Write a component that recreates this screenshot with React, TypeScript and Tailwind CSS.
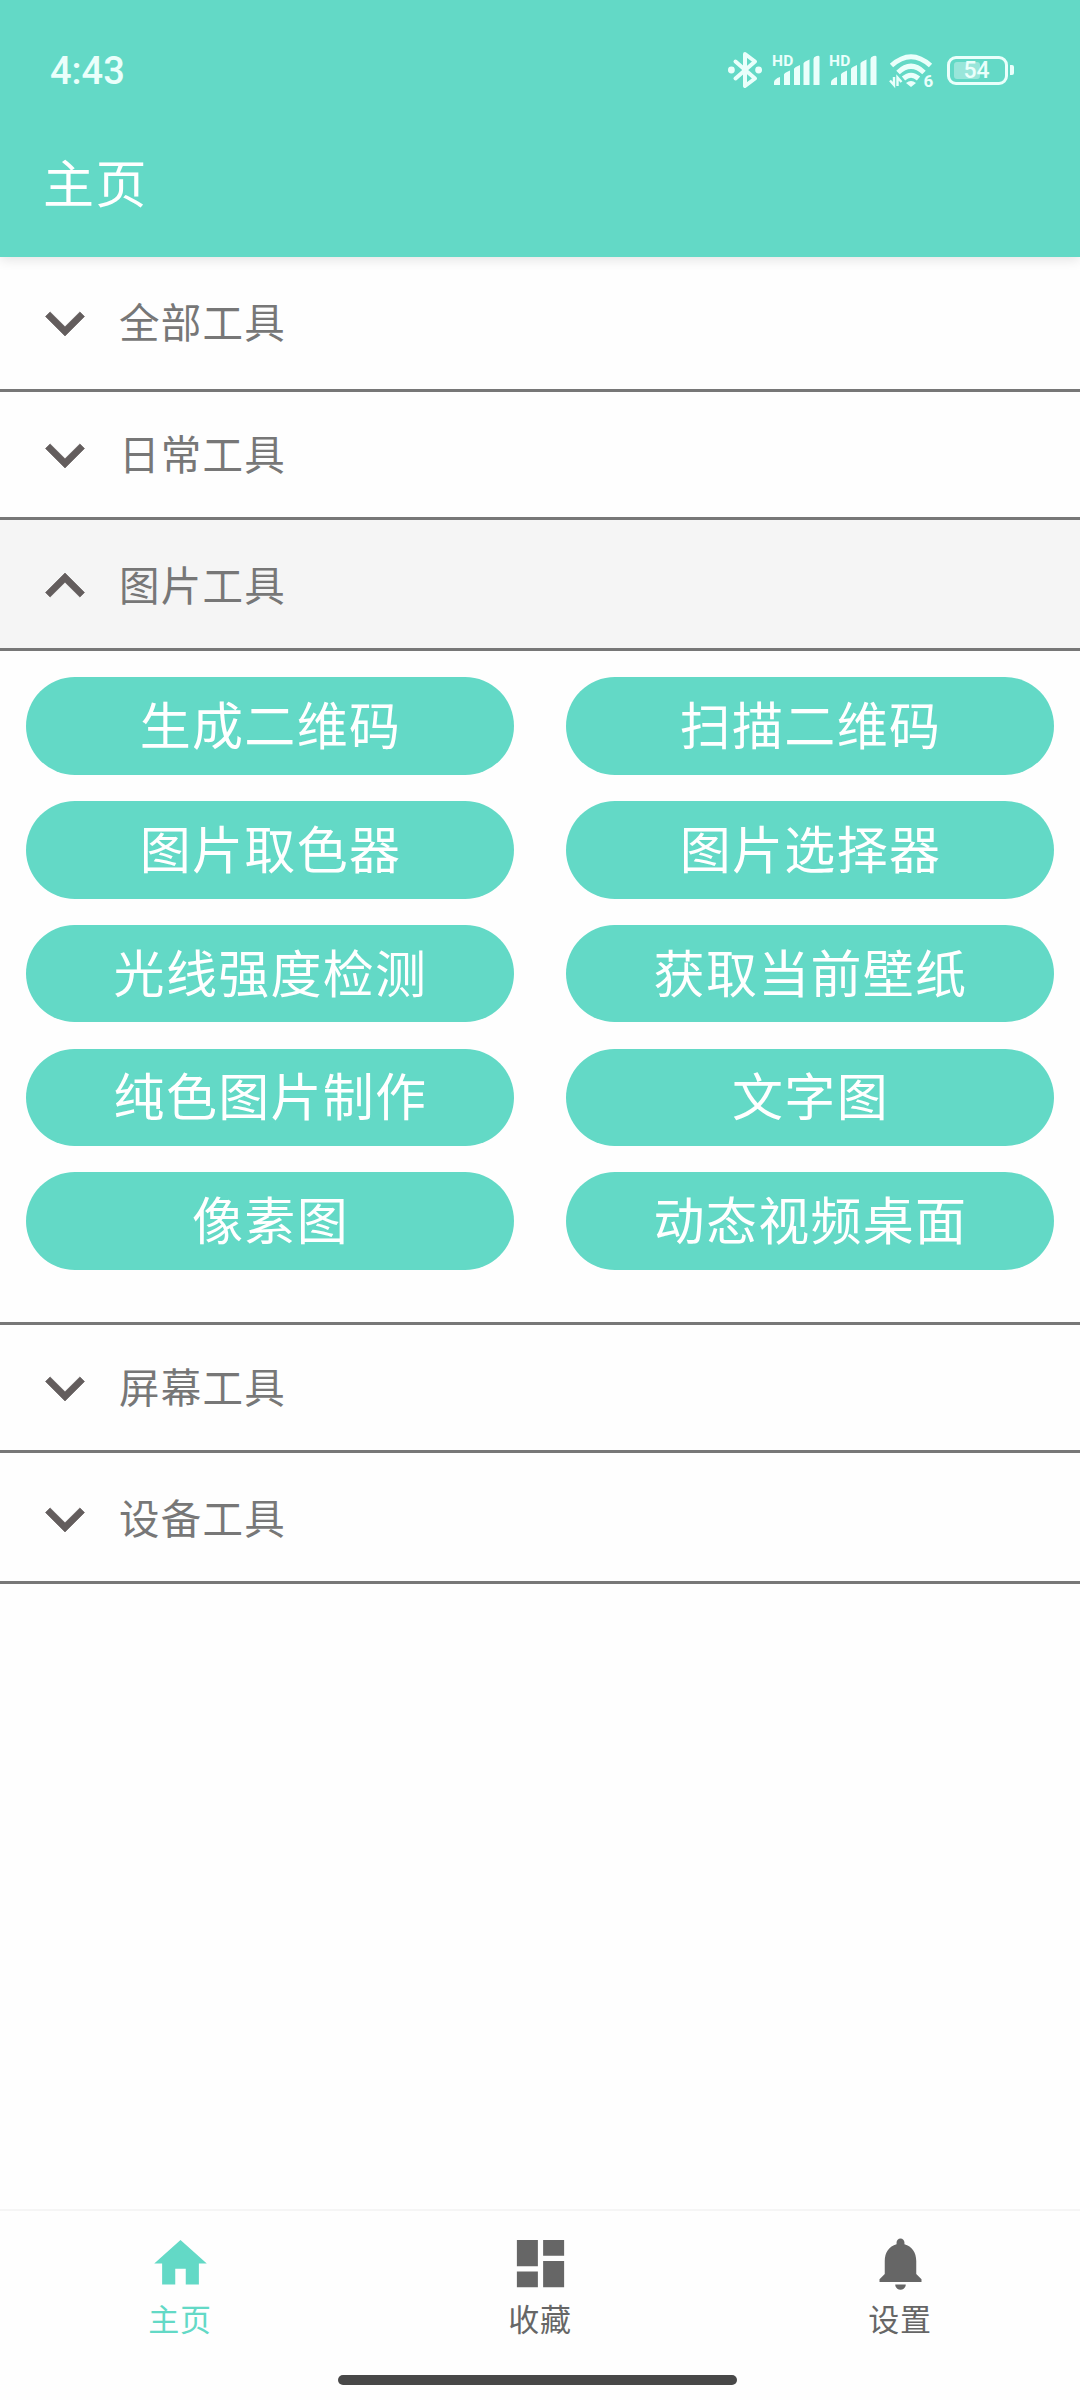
import React, { useState } from 'react';

interface ToolGroup {
  id: string;
  title: string;
  tools: string[];
}

const groups: ToolGroup[] = [
  { id: 'all', title: '全部工具', tools: [] },
  { id: 'daily', title: '日常工具', tools: [] },
  {
    id: 'image',
    title: '图片工具',
    tools: [
      '生成二维码',
      '扫描二维码',
      '图片取色器',
      '图片选择器',
      '光线强度检测',
      '获取当前壁纸',
      '纯色图片制作',
      '文字图',
      '像素图',
      '动态视频桌面',
    ],
  },
  { id: 'screen', title: '屏幕工具', tools: [] },
  { id: 'device', title: '设备工具', tools: [] },
];

const tabs = [
  { id: 'home', label: '主页', path: 'M10 20v-6h4v6h5v-8h3L12 3 2 12h3v8z' },
  {
    id: 'favorites',
    label: '收藏',
    path: 'M3 13h8V3H3v10zm0 8h8v-6H3v6zm10 0h8V11h-8v10zm0-18v6h8V3h-8z',
  },
  {
    id: 'settings',
    label: '设置',
    path: 'M12 22c1.1 0 2-.9 2-2h-4c0 1.1.89 2 2 2zm6-6v-5c0-3.07-1.64-5.64-4.5-6.32V4c0-.83-.67-1.5-1.5-1.5s-1.5.67-1.5 1.5v.68C7.63 5.36 6 7.92 6 11v5l-2 2v1h16v-1l-2-2z',
  },
];

function SignalIcon() {
  return (
    <svg className="h-[36px] w-[48px]" viewBox="0 0 48 36" fill="currentColor">
      <text x="0" y="13.5" fontSize="15.5" fontWeight="700" fontFamily="Roboto, sans-serif" letterSpacing="0.4">
        HD
      </text>
      <path d="M2 33v-2.500Q2 27 8 25v8zM12 33V22.500q0-1.500 6-4V33zM22 33V17q0-1.500 6-4V33zM31.500 33V11.500q0-1.500 6-4V33zM41.500 33V7q0-2 3-3t3 1v28z" />
    </svg>
  );
}

function StatusBar() {
  return (
    <div className="flex h-[140px] items-center justify-between pl-[50px] pr-[66px] text-[#eafffb]">
      <span className="pt-[1px] font-[Roboto,sans-serif] text-[38px] font-medium leading-none">4:43</span>
      <div className="flex items-center">
        {/* Bluetooth */}
        <svg className="mr-[10px] h-[38px] w-[34px]" viewBox="0 0 34 38" fill="none" stroke="currentColor" strokeWidth="4">
          <path d="M7.500 10.500L27 27.500 17 35V3l10 7.500L7.500 27.500" strokeLinejoin="round" strokeLinecap="round" />
          <circle cx="3.4" cy="19" r="3.4" fill="currentColor" stroke="none" />
          <circle cx="30.6" cy="19" r="3.4" fill="currentColor" stroke="none" />
        </svg>
        <SignalIcon />
        <div className="w-[9px]" />
        <SignalIcon />
        {/* Wi-Fi 6 */}
        <svg className="ml-[12px] h-[40px] w-[46px]" viewBox="0 0 46 40" fill="none" stroke="currentColor" strokeWidth="5">
          <path d="M2.500 15.500Q22 -2 41.500 15.500M9 22.500Q22 10 35 22.500" />
          <path d="M14.500 28.500q7.500-6.500 15 0" />
          <path d="M17 33q5-4 10 0l-5 4z" fill="currentColor" stroke="none" />
          <path d="M1 30.500l4 4.500V27M8.500 36v-8.500l4 4.500" strokeWidth="2.4" />
          <text x="34.5" y="37" fontSize="17" fontWeight="700" fontFamily="Roboto, sans-serif" fill="currentColor" stroke="none">
            6
          </text>
        </svg>
        {/* Battery */}
        <div className="ml-[12px] flex items-center">
          <div className="relative flex h-[29px] w-[61px] items-center justify-center rounded-[9px] border-[3px] border-current">
            <div className="absolute bottom-[3px] left-[4px] top-[3px] w-[26px] rounded-[3px] bg-white/35" />
            <span className="relative pr-[2px] font-[Roboto,sans-serif] text-[23px] font-medium leading-none">54</span>
          </div>
          <div className="ml-[2px] h-[10px] w-[4px] rounded-r-[2px] bg-current" />
        </div>
      </div>
    </div>
  );
}

export default function App() {
  const [openId, setOpenId] = useState('image');
  const [activeTab, setActiveTab] = useState('home');

  return (
    <div className="flex h-[2400px] w-[1080px] flex-col bg-[#fefefe] font-['Noto_Sans_CJK_SC',sans-serif]">
      <header className="relative h-[257px] bg-[#63d9c6] shadow-[0_2px_12px_rgba(0,0,0,0.12)]">
        <StatusBar />
        <h1 className="pl-[43px] pt-[5px] text-[51px] leading-[72px] tracking-[1.500px] text-white">主页</h1>
      </header>

      <main className="flex-1">
        {groups.map((group, index) => {
          const isOpen = group.id === openId;
          const afterOpen = index > 0 && groups[index - 1].id === openId;
          const hasTopLine = index === 1 || afterOpen;
          return (
            <section key={group.id}>
              <button
                onClick={() => setOpenId(isOpen ? '' : group.id)}
                className={`flex w-full items-center border-[#777777] pl-[26px] ${
                  index === 0 ? 'h-[132px]' : 'h-[131px] border-b-[3px]'
                } ${hasTopLine ? 'border-t-[3px]' : ''} ${index > 1 && !hasTopLine ? 'pt-[3px]' : ''} ${
                  isOpen ? 'bg-[#f5f5f5]' : ''
                }`}
              >
                <svg
                  className="h-[78px] w-[78px] text-[#635d5d]"
                  viewBox="0 0 24 24"
                  fill="currentColor"
                  stroke="currentColor"
                  strokeWidth="0.2"
                >
                  {isOpen ? (
                    <path d="M12 8l-6 6 1.410 1.410L12 10.830l4.590 4.580L18 14z" />
                  ) : (
                    <path d="M16.590 8.590L12 13.170 7.410 8.590 6 10l6 6 6-6z" />
                  )}
                </svg>
                <span className="ml-[15px] pb-[4px] text-[40.500px] leading-[60px] tracking-[1.250px] text-[#777777]">
                  {group.title}
                </span>
              </button>
              {isOpen && (
                <div className="grid h-[671px] grid-cols-2 content-start gap-x-[52px] gap-y-[26.250px] px-[26px] pt-[26.300px]">
                  {group.tools.map((tool) => (
                    <button
                      key={tool}
                      className="flex h-[97.500px] items-center justify-center rounded-full bg-[#63d9c6] pb-[5px] pl-[1px] text-[51px] leading-none tracking-[1.300px] text-white"
                    >
                      {tool}
                    </button>
                  ))}
                </div>
              )}
            </section>
          );
        })}
      </main>

      <nav className="flex h-[191px] flex-col items-center border-t-2 border-[#f5f5f5]">
        <div className="grid w-full grid-cols-3">
          {tabs.map((tab) => (
            <button
              key={tab.id}
              onClick={() => setActiveTab(tab.id)}
              className={`flex flex-col items-center pt-[21px] ${
                tab.id === activeTab ? 'text-[#63d9c6]' : 'text-[#666666]'
              }`}
            >
              <svg className="h-[63px] w-[63px]" viewBox="0 0 24 24" fill="currentColor">
                <path d={tab.path} />
              </svg>
              <span className="mt-[3px] text-[31px] leading-[40px] tracking-[0.800px]">{tab.label}</span>
            </button>
          ))}
        </div>
        <div className="mr-[5px] mt-[37px] h-[10px] w-[399px] rounded-full bg-[#484848]" />
      </nav>
    </div>
  );
}
